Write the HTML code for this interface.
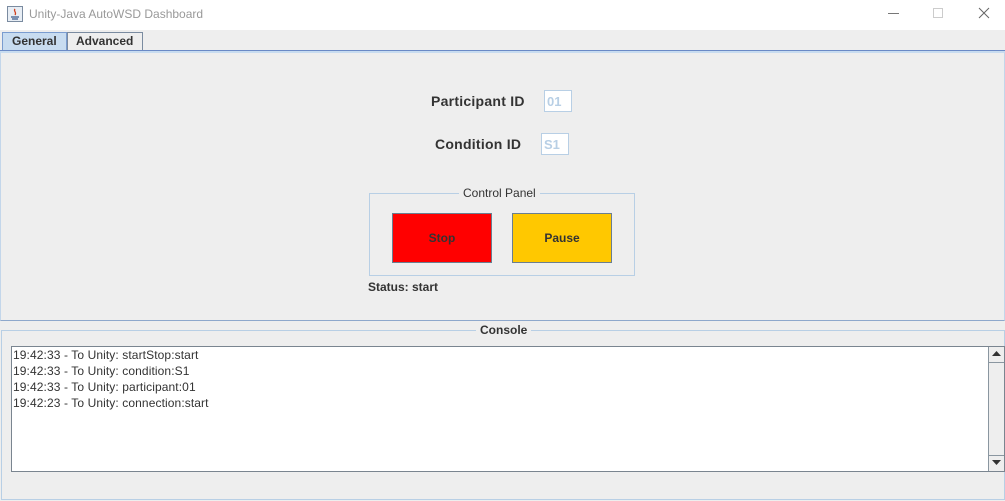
<!DOCTYPE html>
<html><head><style>
*{margin:0;padding:0;box-sizing:border-box}
body{width:1005px;height:501px;background:#eeeeee;font-family:"Liberation Sans",Arial,sans-serif;position:relative;overflow:hidden;color:#333}
.a{position:absolute}
</style></head><body>
<div class="a" style="left:0;top:0;width:1005px;height:30px;background:#fff"></div>
<svg class="a" style="left:7px;top:6px" width="16" height="16"><rect x="0.5" y="0.5" width="15" height="15" fill="#e8eef5" stroke="#7a8ba0"/><path d="M4 11h8M5 13h6" stroke="#3a5a8a" stroke-width="1.2"/><path d="M8 3c-2 2 2 3 0 6" stroke="#d04020" fill="none" stroke-width="1.3"/></svg>
<div class="a" style="left:29px;top:7px;font-size:12px;color:#999">Unity-Java AutoWSD Dashboard</div>
<div class="a" style="left:888px;top:13px;width:11px;height:1px;background:#777"></div>
<div class="a" style="left:933px;top:8px;width:10px;height:10px;border:1px solid #ccc"></div>
<svg class="a" style="left:978px;top:7px" width="12" height="12"><path d="M1 1L11 11M11 1L1 11" stroke="#666" stroke-width="1"/></svg>
<div class="a" style="left:2px;top:32px;width:65px;height:19px;background:#c8dcf0;border:1px solid #7a9ccf;border-bottom:none;font-size:12px;font-weight:bold;padding:1px 0 0 9px">General</div>
<div class="a" style="left:67px;top:32px;width:76px;height:18px;background:#eee;border:1px solid #7a8ba0;border-bottom:none;font-size:12px;font-weight:bold;padding:1px 0 0 8px">Advanced</div>
<div class="a" style="left:0;top:50px;width:1005px;height:1px;background:#6a8ac6"></div>
<div class="a" style="left:0;top:51px;width:1005px;height:270px;border:1px solid #c3d6ea;border-top:2px solid #c8dcf0;border-bottom:1px solid #8ea8cc"></div>
<div class="a" style="left:431px;top:93px;font-size:14px;font-weight:bold;letter-spacing:0.25px">Participant ID</div>
<div class="a" style="left:544px;top:90px;width:28px;height:22px;background:#fff;border:1px solid #b8cfe5;font-size:13px;font-weight:bold;color:#b8cfe5;padding:3px 0 0 2px">01</div>
<div class="a" style="left:435px;top:136px;font-size:14px;font-weight:bold;letter-spacing:0.25px">Condition ID</div>
<div class="a" style="left:541px;top:133px;width:28px;height:22px;background:#fff;border:1px solid #b8cfe5;font-size:13px;font-weight:bold;color:#b8cfe5;padding:3px 0 0 2px">S1</div>
<div class="a" style="left:369px;top:193px;width:266px;height:83px;border:1px solid #b8cfe5"></div>
<div class="a" style="left:459px;top:186px;background:#eee;padding:0 4px;font-size:12px">Control Panel</div>
<div class="a" style="left:392px;top:213px;width:100px;height:50px;background:#ff0000;border:1px solid #6a7e90;font-size:12px;font-weight:bold;text-align:center;line-height:49px">Stop</div>
<div class="a" style="left:512px;top:213px;width:100px;height:50px;background:#ffc800;border:1px solid #6a7e90;font-size:12px;font-weight:bold;text-align:center;line-height:49px">Pause</div>
<div class="a" style="left:368px;top:280px;font-size:12px;font-weight:bold">Status: start</div>
<div class="a" style="left:1px;top:330px;width:1004px;height:170px;border:1px solid #b8cfe5"></div>
<div class="a" style="left:476px;top:323px;background:#eee;padding:0 4px;font-size:12px;font-weight:bold">Console</div>
<div class="a" style="left:11px;top:346px;width:994px;height:126px;background:#fff;border:1px solid #7a8590;font-size:12px;line-height:16px;padding:0 0 0 1px;color:#333;letter-spacing:0.1px">
19:42:33 - To Unity: startStop:start<br>19:42:33 - To Unity: condition:S1<br>19:42:33 - To Unity: participant:01<br>19:42:23 - To Unity: connection:start</div>
<div class="a" style="left:988px;top:347px;width:16px;height:124px;background:#eee;border-left:1px solid #8a96a0"></div>
<div class="a" style="left:989px;top:347px;width:15px;height:16px;border-bottom:1px solid #8a96a0"></div>
<div class="a" style="left:989px;top:455px;width:15px;height:16px;border-top:1px solid #8a96a0"></div>
<svg class="a" style="left:991px;top:350px" width="12" height="8"><path d="M1 6h9L5.5 1z" fill="#333"/></svg>
<svg class="a" style="left:991px;top:459px" width="12" height="8"><path d="M1 1h9L5.5 6z" fill="#333"/></svg>
</body></html>
